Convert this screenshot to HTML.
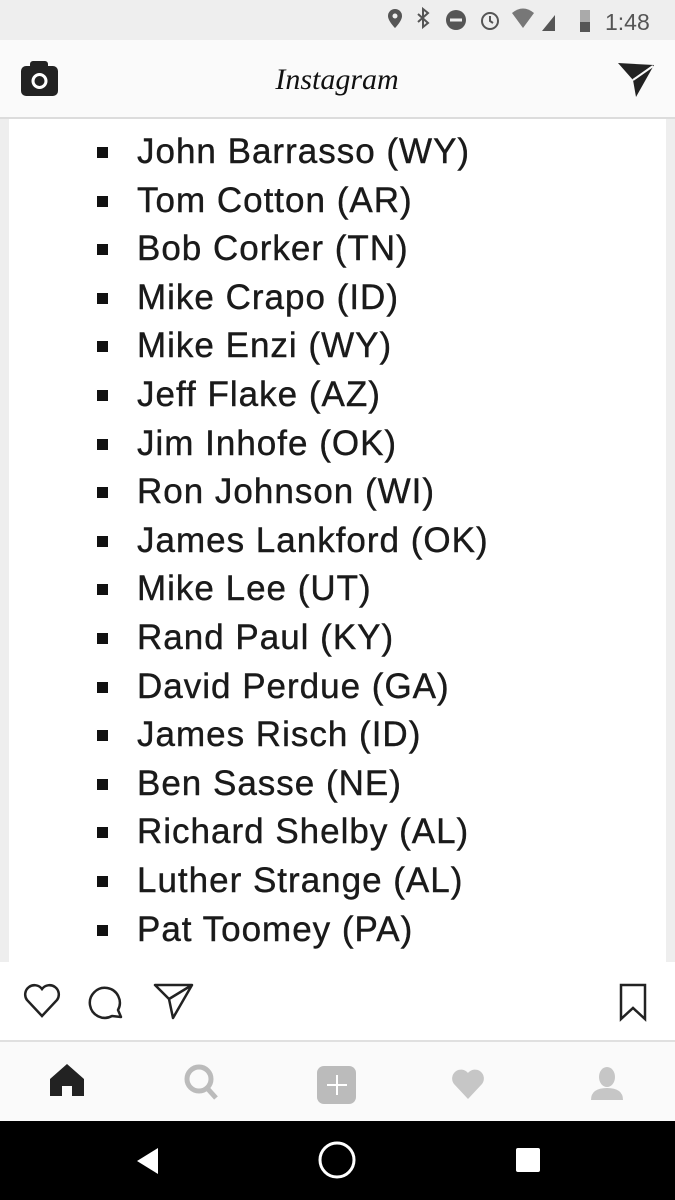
<!DOCTYPE html>
<html><head><style>
body{margin:0;width:675px;height:1200px;overflow:hidden;background:#fff;font-family:"Liberation Sans",sans-serif;position:relative}
.sb{position:absolute;top:0;left:0;width:675px;height:40px;background:#eeeeee}
.hd{position:absolute;top:40px;left:0;width:675px;height:77px;background:#fafafa;border-bottom:2px solid #dcdcdc}
.ct{position:absolute;top:119px;left:0;width:675px;height:843px;background:#eeeeee}
.ct .w{position:absolute;left:9px;right:9px;top:0;bottom:0;background:#fff}
.li{position:absolute;left:137px;font-size:35px;color:#1a1a1a;letter-spacing:1px;line-height:40px;white-space:nowrap;-webkit-text-stroke:0.4px #1a1a1a}
.bu{position:absolute;left:97px;width:11px;height:11px;background:#111}
.ab{position:absolute;top:962px;left:0;width:675px;height:78px;background:#fff;border-bottom:2px solid #e0e0e0}
.nv{position:absolute;top:1042px;left:0;width:675px;height:79px;background:#fafafa}
.bk{position:absolute;top:1121px;left:0;width:675px;height:79px;background:#000}
</style></head><body>
<div class="sb">
<svg width="675" height="40" style="position:absolute;left:0;top:0">
<path d="M395 9a7 7 0 0 1 7 7c0 5-7 12-7 12s-7-7-7-12a7 7 0 0 1 7-7z" fill="#555"/><circle cx="395" cy="16" r="2.5" fill="#eee"/>
<path d="M418 14l10 9-5 4v-18l5 4-10 9" stroke="#555" stroke-width="2" fill="none"/>
<circle cx="456" cy="20" r="10" fill="#555"/><rect x="450" y="18.5" width="12" height="3" fill="#eee"/>
<circle cx="490" cy="21" r="8" stroke="#555" stroke-width="2" fill="none"/><path d="M490 16v5l3 2" stroke="#555" stroke-width="2" fill="none"/>
<path d="M512 13q11-9 22 0l-11 15z" fill="#777"/>
<path d="M542 31l13-16v16z" fill="#555"/>
<rect x="580" y="10" width="10" height="22" fill="#aaa"/><rect x="580" y="22" width="10" height="10" fill="#555"/>
<text x="605" y="30" font-size="23" fill="#555" font-family="Liberation Sans">1:48</text>
</svg></div>
<div class="hd">
<svg width="675" height="77" style="position:absolute;left:0;top:0">
<rect x="21" y="26" width="37" height="30" rx="5" fill="#222"/><rect x="30" y="21" width="18" height="8" rx="3" fill="#222"/>
<circle cx="39.5" cy="41" r="8" fill="#fff"/><circle cx="39.5" cy="41" r="5" fill="#222"/>
<path d="M618 23l36 2-18 32-3-17z" fill="#222"/><path d="M633 40l20-14" stroke="#fafafa" stroke-width="2"/>
<text x="337" y="49" text-anchor="middle" font-size="30" font-family="Liberation Serif" font-style="italic" fill="#111">Instagram</text>
</svg></div>
<div class="ct"><div class="w"></div>
<div class="bu" style="top:28px"></div><div class="li" style="top:13px">John Barrasso (WY)</div>
<div class="bu" style="top:77px"></div><div class="li" style="top:62px">Tom Cotton (AR)</div>
<div class="bu" style="top:125px"></div><div class="li" style="top:110px">Bob Corker (TN)</div>
<div class="bu" style="top:174px"></div><div class="li" style="top:159px">Mike Crapo (ID)</div>
<div class="bu" style="top:222px"></div><div class="li" style="top:207px">Mike Enzi (WY)</div>
<div class="bu" style="top:271px"></div><div class="li" style="top:256px">Jeff Flake (AZ)</div>
<div class="bu" style="top:320px"></div><div class="li" style="top:305px">Jim Inhofe (OK)</div>
<div class="bu" style="top:368px"></div><div class="li" style="top:353px">Ron Johnson (WI)</div>
<div class="bu" style="top:417px"></div><div class="li" style="top:402px">James Lankford (OK)</div>
<div class="bu" style="top:465px"></div><div class="li" style="top:450px">Mike Lee (UT)</div>
<div class="bu" style="top:514px"></div><div class="li" style="top:499px">Rand Paul (KY)</div>
<div class="bu" style="top:563px"></div><div class="li" style="top:548px">David Perdue (GA)</div>
<div class="bu" style="top:611px"></div><div class="li" style="top:596px">James Risch (ID)</div>
<div class="bu" style="top:660px"></div><div class="li" style="top:645px">Ben Sasse (NE)</div>
<div class="bu" style="top:708px"></div><div class="li" style="top:693px">Richard Shelby (AL)</div>
<div class="bu" style="top:757px"></div><div class="li" style="top:742px">Luther Strange (AL)</div>
<div class="bu" style="top:806px"></div><div class="li" style="top:791px">Pat Toomey (PA)</div>
</div>
<div class="ab">
<svg width="675" height="78" style="position:absolute;left:0;top:0">
<path d="M42 54l-15-16a9 9 0 0 1 15-11a9 9 0 0 1 15 11z" stroke="#222" stroke-width="2.5" fill="none"/>
<path d="M121 55l-3-7a15 15 0 1 0-6 6z" stroke="#222" stroke-width="2.5" fill="none" stroke-linejoin="round"/>
<path d="M155 23h37l-19 33-4-19zM169 37l23-14" stroke="#222" stroke-width="2.5" fill="none" stroke-linejoin="round"/>
<path d="M621 23h24v34l-12-11-12 11z" stroke="#222" stroke-width="2.5" fill="none"/>
</svg></div>
<div class="nv">
<svg width="675" height="79" style="position:absolute;left:0;top:0">
<path d="M50 54v-17l17-15 17 15v17h-12v-10h-10v10z" fill="#222"/>
<circle cx="199" cy="37" r="12" stroke="#bbb" stroke-width="5" fill="none"/><path d="M207 46l9 10" stroke="#bbb" stroke-width="5"/>
<rect x="317" y="24" width="39" height="38" rx="7" fill="#bbb"/><path d="M337 33v20M327 43h20" stroke="#fff" stroke-width="2"/>
<path d="M468 57l-14-15a8 8 0 0 1 14-11a8 8 0 0 1 14 11z" fill="#c6c6c6"/>
<ellipse cx="607" cy="35" rx="8" ry="10" fill="#c6c6c6"/><path d="M591 58q0-12 16-12t16 12z" fill="#c6c6c6"/>
</svg></div>
<div class="bk">
<svg width="675" height="79" style="position:absolute;left:0;top:0">
<path d="M158 27v26l-21-13z" fill="#fff"/>
<circle cx="337" cy="39" r="17" stroke="#fff" stroke-width="3" fill="none"/>
<rect x="516" y="27" width="24" height="24" rx="2" fill="#fff"/>
</svg></div>
</body></html>
